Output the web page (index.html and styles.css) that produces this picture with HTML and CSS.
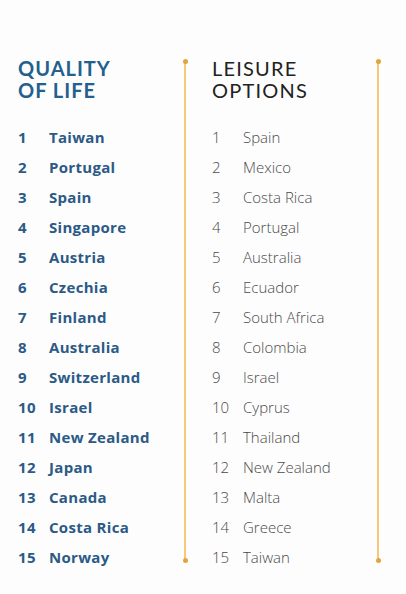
FILE: index.html
```html
<!DOCTYPE html>
<html>
<head>
<meta charset="utf-8">
<link rel="stylesheet" href="styles.css">
</head>
<body>
<div class="page">
  <section class="col col-quality">
    <h2 class="title title-quality">QUALITY<br>OF LIFE</h2>
    <ol class="list list-quality">
      <li><span class="num">1</span><span class="name">Taiwan</span></li>
      <li><span class="num">2</span><span class="name">Portugal</span></li>
      <li><span class="num">3</span><span class="name">Spain</span></li>
      <li><span class="num">4</span><span class="name">Singapore</span></li>
      <li><span class="num">5</span><span class="name">Austria</span></li>
      <li><span class="num">6</span><span class="name">Czechia</span></li>
      <li><span class="num">7</span><span class="name">Finland</span></li>
      <li><span class="num">8</span><span class="name">Australia</span></li>
      <li><span class="num">9</span><span class="name">Switzerland</span></li>
      <li><span class="num">10</span><span class="name">Israel</span></li>
      <li><span class="num">11</span><span class="name">New Zealand</span></li>
      <li><span class="num">12</span><span class="name">Japan</span></li>
      <li><span class="num">13</span><span class="name">Canada</span></li>
      <li><span class="num">14</span><span class="name">Costa Rica</span></li>
      <li><span class="num">15</span><span class="name">Norway</span></li>
    </ol>
  </section>
  <div class="divider"></div>
  <section class="col col-leisure">
    <h2 class="title title-leisure">LEISURE<br>OPTIONS</h2>
    <ol class="list list-leisure">
      <li><span class="num">1</span><span class="name">Spain</span></li>
      <li><span class="num">2</span><span class="name">Mexico</span></li>
      <li><span class="num">3</span><span class="name">Costa Rica</span></li>
      <li><span class="num">4</span><span class="name">Portugal</span></li>
      <li><span class="num">5</span><span class="name">Australia</span></li>
      <li><span class="num">6</span><span class="name">Ecuador</span></li>
      <li><span class="num">7</span><span class="name">South Africa</span></li>
      <li><span class="num">8</span><span class="name">Colombia</span></li>
      <li><span class="num">9</span><span class="name">Israel</span></li>
      <li><span class="num">10</span><span class="name">Cyprus</span></li>
      <li><span class="num">11</span><span class="name">Thailand</span></li>
      <li><span class="num">12</span><span class="name">New Zealand</span></li>
      <li><span class="num">13</span><span class="name">Malta</span></li>
      <li><span class="num">14</span><span class="name">Greece</span></li>
      <li><span class="num">15</span><span class="name">Taiwan</span></li>
    </ol>
  </section>
  <div class="divider"></div>
</div>
</body>
</html>
```
FILE: styles.css
```css
html, body {
  margin: 0;
  padding: 0;
  background: #fdfdfd;
}
.page {
  display: flex;
  align-items: flex-start;
  padding-top: 57px;
  width: 406px;
  height: 594px;
  box-sizing: border-box;
}
.col-quality {
  flex: none;
  width: 184px;
  padding-left: 18px;
  box-sizing: border-box;
}
.col-leisure {
  flex: none;
  width: 191px;
  padding-left: 26px;
  box-sizing: border-box;
}
.title {
  margin: 0;
  font-family: "Lato", "Open Sans", sans-serif;
  font-size: 20px;
  line-height: 22px;
  letter-spacing: 1px;
}
.title-quality {
  color: #22608f;
  font-weight: 700;
}
.title-leisure {
  color: #222222;
  font-weight: 400;
  letter-spacing: 1.2px;
}
.list {
  list-style: none;
  margin: 21px 0 0 0;
  padding: 0;
}
.list li {
  display: flex;
  height: 30px;
  align-items: center;
}
.num {
  width: 31px;
  flex: none;
}
.list-quality li {
  font-family: "Open Sans", sans-serif;
  font-weight: 700;
  font-size: 15px;
  letter-spacing: 0.3px;
  color: #2b5a86;
}
.list-leisure li {
  font-family: "Open Sans", sans-serif;
  font-weight: 300;
  font-size: 15px;
  color: #4a4a4a;
}
.divider {
  position: relative;
  flex: none;
  width: 2px;
  height: 500px;
  margin-top: 4px;
  background: #f5c977;
}
.divider::before,
.divider::after {
  content: "";
  position: absolute;
  left: -1.5px;
  width: 5px;
  height: 5px;
  border-radius: 50%;
  background: #e3a43e;
}
.divider::before { top: -2px; }
.divider::after { bottom: -2px; }
```
